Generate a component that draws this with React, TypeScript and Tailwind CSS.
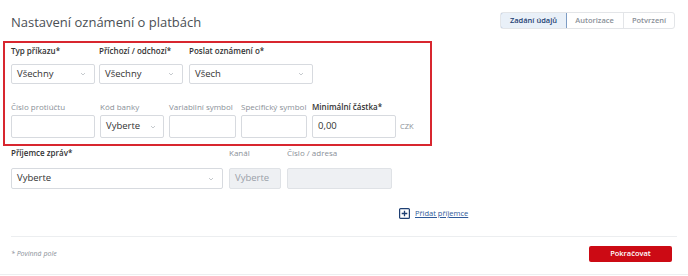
import { ReactNode } from 'react';

const Chevron = () => (
    <svg width="6" height="4" viewBox="0 0 6 4" className="shrink-0">
        <path d="M1 1 L3 3 L5 1" fill="none" stroke="#b8bcc2" strokeWidth="0.8" />
    </svg>
);

function Select({ value, w }: { value: string; w: string }) {
    return (
        <div className={`${w} h-[20px] border border-[#d7dadf] rounded-[2px] bg-white flex items-center justify-between pl-[5px] pr-[8px] text-[9.5px] text-[#333]`}>
            <span>{value}</span>
            <Chevron />
        </div>
    );
}

function Field({ label, bold, children, gap }: { label: string; bold?: boolean; children: ReactNode; gap: string }) {
    return (
        <div className="flex flex-col">
            <div className={`text-[8px] leading-[10px] ${gap} ${bold ? 'font-semibold text-[#333]' : 'text-[#8a9098]'}`}>{label}</div>
            {children}
        </div>
    );
}

const Input = ({ w, value }: { w: string; value?: string }) => (
    <div className={`${w} h-[23px] border border-[#d7dadf] rounded-[2px] bg-white flex items-center pl-[5px] text-[9.5px] text-[#333]`}>{value}</div>
);

export default function App() {
    return (
        <div className="w-[688px] h-[276px] bg-white overflow-hidden" style={{ fontFamily: '"Open Sans", sans-serif' }}>
            {/* Header */}
            <div className="flex items-start justify-between pl-[11px] pr-[13px] pt-[12px] h-[41px]">
                <h1 className="text-[13px] leading-[20px] text-[#4a4f55]">Nastavení oznámení o platbách</h1>
                <div className="flex h-[17px] text-[7.5px] font-semibold border border-[#e3e5e8] rounded-[3px] overflow-hidden">
                    <div className="w-[67px] flex items-center justify-center bg-[#e9f0f8] border border-[#7d9cc4] rounded-l-[3px] text-[#1e3f73] -m-px">Zadání údajů</div>
                    <div className="w-[58px] flex items-center justify-center text-[#8a9098] border-r border-[#e3e5e8]">Autorizace</div>
                    <div className="w-[50px] flex items-center justify-center text-[#8a9098]">Potvrzení</div>
                </div>
            </div>

            {/* Highlighted filter block */}
            <div className="ml-[3px] w-[429px] h-[105px] border-2 border-[#d8262f] pl-[6px] pt-[3px]">
                <div className="flex gap-[4px]">
                    <Field label="Typ příkazu*" bold gap="mb-[8px]"><Select value="Všechny" w="w-[84px]" /></Field>
                    <Field label="Příchozí / odchozí*" bold gap="mb-[8px]"><Select value="Všechny" w="w-[84px]" /></Field>
                    <div className="ml-[2px]"><Field label="Poslat oznámení o*" bold gap="mb-[8px]"><Select value="Všech" w="w-[124px]" /></Field></div>
                </div>
                <div className="flex gap-[5px] mt-[18px] items-end">
                    <Field label="Číslo protiúčtu" gap="mb-[3px]"><Input w="w-[84px]" /></Field>
                    <Field label="Kód banky" gap="mb-[3px]">
                        <div className="w-[64px] h-[23px] border border-[#d7dadf] rounded-[2px] flex items-center justify-between pl-[5px] pr-[7px] text-[9.5px] text-[#333]">
                            <span>Vyberte</span><Chevron />
                        </div>
                    </Field>
                    <Field label="Variabilní symbol" gap="mb-[3px]"><Input w="w-[67px]" /></Field>
                    <Field label="Specifický symbol" gap="mb-[3px]"><Input w="w-[66px]" /></Field>
                    <Field label="Minimální částka*" bold gap="mb-[3px]"><Input w="w-[84px]" value="0,00" /></Field>
                    <div className="text-[7.5px] text-[#8a9098] h-[23px] flex items-center -ml-[1px]">CZK</div>
                </div>
            </div>

            {/* Recipients */}
            <div className="flex pl-[11px] mt-[2px] gap-[6px]">
                <Field label="Příjemce zpráv*" bold gap="mb-[10px]"><Select value="Vyberte" w="w-[212px] !h-[21px]" /></Field>
                <Field label="Kanál" gap="mb-[10px]">
                    <div className="w-[52px] h-[21px] border border-[#dfe2e6] rounded-[2px] bg-[#eef0f3] flex items-center pl-[5px] text-[9.5px] text-[#9aa0a8]">Vyberte</div>
                </Field>
                <Field label="Číslo / adresa" gap="mb-[10px]">
                    <div className="w-[105px] h-[21px] border border-[#dfe2e6] rounded-[2px] bg-[#eef0f3]" />
                </Field>
            </div>

            <div className="flex items-center ml-[399px] mt-[19px] gap-[5px] h-[11px]">
                <svg width="11" height="11" viewBox="0 0 11 11">
                    <rect x="0.6" y="0.6" width="9.8" height="9.8" rx="1" fill="none" stroke="#1e3f73" strokeWidth="1.2" />
                    <path d="M5.5 2.7 V8.3 M2.7 5.5 H8.3" stroke="#1e3f73" strokeWidth="1.3" />
                </svg>
                <span className="text-[7.5px] text-[#2f5a9a] underline">Přidat příjemce</span>
            </div>

            {/* Footer */}
            <div className="mx-[11px] mt-[17px] border-t border-[#eceef0]" />
            <div className="flex items-start justify-between pl-[11px] pr-[16px] pt-[9px] h-[37px]">
                <span className="text-[7px] leading-[16px] italic text-[#8a9098]">* Povinná pole</span>
                <button className="w-[83px] h-[16px] rounded-[2px] bg-[#cc0a14] text-white text-[7.5px] font-semibold">Pokračovat</button>
            </div>
            <div className="border-t border-[#eceef0]" />
        </div>
    );
}
